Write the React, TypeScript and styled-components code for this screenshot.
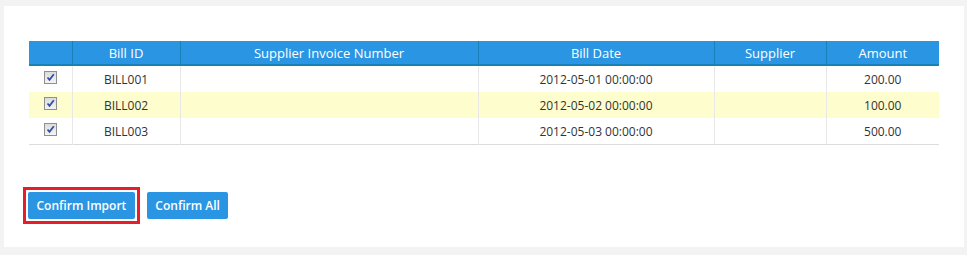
import { FC } from 'react';
import styled, { createGlobalStyle } from 'styled-components';

type Bill = {
  id: string;
  invoice: string;
  date: string;
  supplier: string;
  amount: string;
};

const BILLS: Bill[] = [
  { id: 'BILL001', invoice: '', date: '2012-05-01 00:00:00', supplier: '', amount: '200.00' },
  { id: 'BILL002', invoice: '', date: '2012-05-02 00:00:00', supplier: '', amount: '100.00' },
  { id: 'BILL003', invoice: '', date: '2012-05-03 00:00:00', supplier: '', amount: '500.00' },
];

const COLUMNS = [
  { label: '', width: 43 },
  { label: 'Bill ID', width: 108 },
  { label: 'Supplier Invoice Number', width: 298 },
  { label: 'Bill Date', width: 236 },
  { label: 'Supplier', width: 112 },
  { label: 'Amount', width: 113 },
];

const CheckMark: FC = () => (
  <CheckBox>
    <svg width="9" height="9" viewBox="0 0 9 9">
      <path d="M1.5 4.5 L3.5 6.8 L7.8 1.2" fill="none" stroke="#2f4fa8" strokeWidth="1.8" />
    </svg>
  </CheckBox>
);

export default function App() {
  return <>
    <GlobalStyle />
    <Panel>
      <Table>
        <colgroup>
          {COLUMNS.map((c, i) => <col key={i} style={{ width: c.width }} />)}
        </colgroup>
        <thead>
          <tr>
            {COLUMNS.map((c, i) => <Th key={i}>{c.label}</Th>)}
          </tr>
        </thead>
        <tbody>
          {BILLS.map((b, i) => (
            <Row key={b.id} $highlight={i === 1}>
              <Td><CheckMark /></Td>
              <Td>{b.id}</Td>
              <Td>{b.invoice}</Td>
              <Td>{b.date}</Td>
              <Td>{b.supplier}</Td>
              <Td>{b.amount}</Td>
            </Row>
          ))}
        </tbody>
      </Table>
      <Actions>
        <FocusRing>
          <Button>Confirm Import</Button>
        </FocusRing>
        <Button>Confirm All</Button>
      </Actions>
    </Panel>
  </>;
}

const GlobalStyle = createGlobalStyle`
  html, body {
    margin: 0;
    background: #f3f3f3;
  }
  body {
    padding: 6px 3px 9px 4px;
    font-family: "Open Sans", "Liberation Sans", sans-serif;
  }
`;

const Panel = styled.div`
  width: 960px;
  box-sizing: border-box;
  background: #fff;
  padding: 35px 25px 23px 25px;
`;

const Table = styled.table`
  width: 910px;
  border-collapse: collapse;
  table-layout: fixed;
  border-bottom: 1px solid #dcdcdc;
`;

const Th = styled.th`
  height: 23px;
  padding: 0;
  background: #2a95e3;
  border-bottom: 2px solid #1781b8;
  border-left: 1px solid #1781b8;
  color: #fff;
  font-size: 13px;
  font-weight: normal;
  text-align: center;
  &:first-child {
    border-left: none;
  }
`;

const Row = styled.tr<{ $highlight?: boolean }>`
  background: ${p => (p.$highlight ? '#fefdcd' : '#fff')};
`;

const Td = styled.td`
  height: 26px;
  padding: 0;
  border-left: 1px solid #e8e8e8;
  color: #333;
  font-size: 12px;
  text-align: center;
  vertical-align: middle;
  &:first-child {
    border-left: none;
  }
`;

const CheckBox = styled.span`
  display: inline-flex;
  align-items: center;
  justify-content: center;
  width: 11px;
  height: 11px;
  border: 1px solid #8e8f8f;
  background: linear-gradient(#dcdcdc, #f4f4f4);
  vertical-align: middle;
  margin-top: -5px;
`;

const Actions = styled.div`
  display: flex;
  align-items: center;
  gap: 7px;
  margin-top: 42px;
  margin-left: -6px;
`;

const FocusRing = styled.div`
  display: flex;
  padding: 2px;
  border: 3px solid #e51e2b;
`;

const Button = styled.button`
  height: 27px;
  padding: 0 8.5px;
  border: none;
  border-radius: 2px;
  background: #2a95e3;
  color: #fff;
  font-family: "Open Sans", "Liberation Sans", sans-serif;
  font-size: 12px;
  font-weight: 600;
`;
